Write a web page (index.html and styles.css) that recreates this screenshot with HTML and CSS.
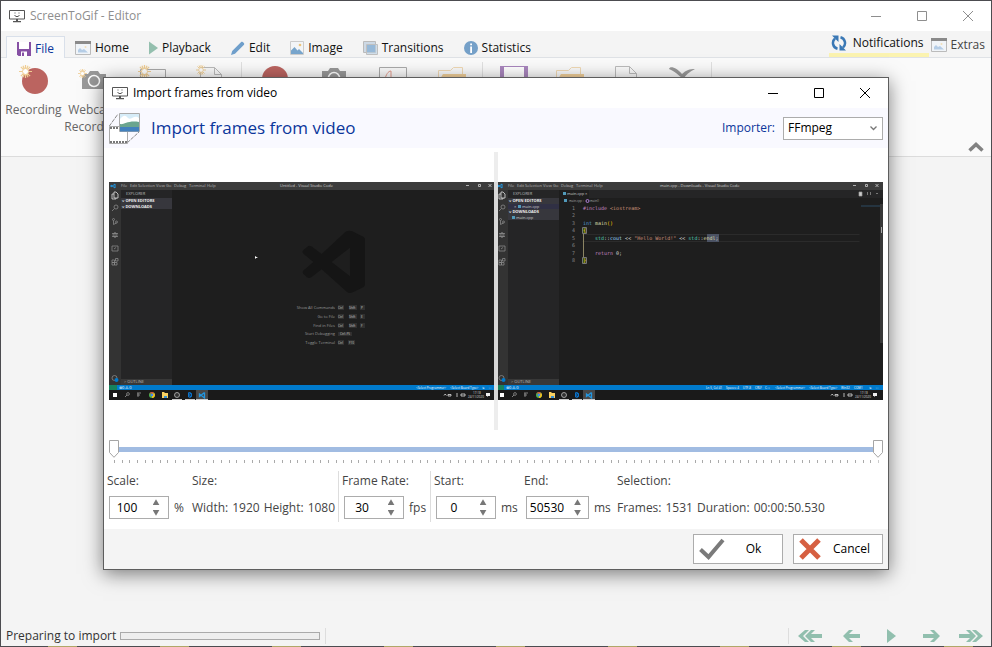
FILE: index.html
```html
<!DOCTYPE html>
<html lang="en">
<head>
<meta charset="utf-8">
<title>ScreenToGif - Editor</title>
<meta name="viewport" content="width=device-width, initial-scale=1">
<link rel="stylesheet" href="styles.css">
</head>
<body>
<svg class="defs" aria-hidden="true">
  <defs>
    <symbol id="monitor" viewBox="0 0 16 14">
      <path d="M.5 1.500h15v8.500H.5z" fill="none" stroke="currentColor"/>
      <path d="M7 10h2v2H7zM4 12h8v1.200H4zM5.500 3.500h1v1h-1zM9.500 3.500h1v1h-1zM5.500 6h1v1h3V6h1v1h-1v1h-3V7h-1z" fill="currentColor"/>
    </symbol>
    <symbol id="min" viewBox="0 0 10 10"><path d="M0 5.500h10" stroke="currentColor"/></symbol>
    <symbol id="max" viewBox="0 0 10 10"><path d="M.5.5h9v9h-9z" fill="none" stroke="currentColor"/></symbol>
    <symbol id="close" viewBox="0 0 10 10"><path d="M0 0l10 10M10 0L0 10" stroke="currentColor"/></symbol>
    <symbol id="window" viewBox="0 0 16 14">
      <path d="M.5.5h15v13H.5z" fill="#f0f4f8" stroke="#bbb"/><path d="M0 0h16v3H0z" fill="#8a8a8a"/>
      <path d="M3 11.500V9l2-2 2 2 2-1 4 3.500z" fill="#b5cde6"/><circle cx="10.500" cy="6" r="1" fill="#f2dfb8"/>
    </symbol>
    <symbol id="star" viewBox="0 0 14 14">
      <path d="M7 0v14M0 7h14M2 2l10 10M12 2L2 12M4.300.7l5.400 12.600M9.700.7L4.300 13.300" stroke="#efcd93" stroke-width="1.300"/>
      <circle cx="7" cy="7" r="3.200" fill="#fff" stroke="#efcd93"/>
    </symbol>
    <symbol id="camera" viewBox="0 0 26 20">
      <path d="M1 4h6l2-3h8l2 3h6v15H1z" fill="#999"/><circle cx="13" cy="11" r="5.500" fill="#999" stroke="#fff" stroke-width="1.500"/>
    </symbol>
    <symbol id="folder" viewBox="0 0 28 28">
      <path d="M.5 28V5.500h12l3-3h9V10" fill="none" stroke="#f0d9b5"/><path d="M5 9h23v5H2z" fill="#f2d09a"/>
    </symbol>
    <symbol id="page" viewBox="0 0 22 28"><path d="M.5 28V.5h14l7 7V28M14.500.5v7h7" fill="none" stroke="#bbb"/></symbol>

    <symbol id="desktop" viewBox="0 0 387 218">
      <path d="M0 0h387v218H0z" fill="#1e1e1e"/>
      <path d="M0 0h387v8H0z" fill="#3c3c3c"/>
      <path d="M0 8h12v195H0z" fill="#333"/>
      <path d="M12 8h51v195H12z" fill="#252526"/>
      <path d="M12 197h51v6H12z" fill="#383838"/>
      <path d="M0 203h387v5H0z" fill="#007acc"/>
      <path d="M0 203h8v5H0z" fill="#16825d"/>
      <path d="M0 208h387v10H0z" fill="#1a1a1a"/>
      <path d="M6 2v4L2 3v2l4-3" fill="none" stroke="#2397e0"/>
      <g class="tiny" fill="#b8b8b8">
        <text x="12" y="5">File</text><text x="21" y="5">Edit</text><text x="29" y="5">Selection</text>
        <text x="47" y="5">View</text><text x="57" y="5">Go</text><text x="65" y="5">Debug</text>
        <text x="80" y="5">Terminal</text><text x="98" y="5">Help</text>
        <text x="17" y="13">EXPLORER</text><text x="15" y="201">&gt; OUTLINE</text>
      </g>
      <path d="M357 3.500h3M369.500 2.500h2v2h-2zM379.500 2l3 3M382.500 2l-3 3" fill="none" stroke="#ccc" stroke-width=".8"/>
      <g fill="none" stroke="#898989" stroke-width=".8">
        <path d="M5 10h2l2 2v4H5zM5 12H3v5h4v-1" stroke="#ddd"/>
        <circle cx="7" cy="25" r="2"/><path d="M5.500 26.500L3 29"/>
        <circle cx="4.500" cy="37.500" r="1"/><circle cx="7.500" cy="40" r="1"/><path d="M4.500 38.500v4M7.500 41l-3 1.500"/>
        <circle cx="6" cy="53" r="2"/><path d="M3 51.500h6M3 54.500h6M6 50v6"/>
        <path d="M3 64h6v5H3zM5 67l2-1.500"/><path d="M3 78h2.500v2.500H3zM3 80.500h2.500V83H3zM5.500 80.500H8V83H5.500zM6.500 76.500H9V79H6.500z"/>
        <circle cx="5.500" cy="196" r="2.500"/>
      </g>
      <circle cx="7.500" cy="198" r="2" fill="#007acc"/>
      <text class="tiny" x="10" y="207" fill="#fff">⊗0 ⚠0</text>
      <path d="M87 208h12v10H87z" fill="#474747"/>
      <path d="M63 217h10v1H63zM76 217h10v1H76zM87 217h12v1H87z" fill="#c8c8c8"/>
      <path d="M4 211h4v4H4z" fill="#fff"/>
      <path d="M16 215l2-2M28 211h4M28 213h3M29 211v4" stroke="#999" stroke-width=".8"/><circle cx="19" cy="212" r="1.400" fill="none" stroke="#999" stroke-width=".7"/>
      <circle cx="43" cy="213" r="3" fill="#4caf50"/><path d="M40.400 211.500a3 3 0 0 1 5.200 0z" fill="#e34133"/><path d="M43 216a3 3 0 0 0 2.600-4.500H43z" fill="#fbc116"/><circle cx="43" cy="213" r="1.300" fill="#4285f4"/>
      <path d="M53 210h2l1 1h3v5h-6z" fill="#fad162"/><path d="M55 214h3v2h-3z" fill="#3b93d8"/>
      <circle cx="68" cy="213" r="2.500" fill="#333" stroke="#bbb" stroke-width=".8"/>
      <path d="M79 210.500l2-.5 2 1.500v3l-2 1.500-2-1z" fill="#0b72c9"/><path d="M80.500 211.500l1 1.500-1 1.500" stroke="#123" fill="none"/>
      <path d="M95.500 210.500v5.500L90.500 212v2.500l5-4" fill="none" stroke="#2397e0" stroke-width="1.300"/>
      <path d="M335 213.500l1.200-1.500 1.200 1.500M339 212.500h3v1.500h-3zM348 211v4M352 212h4v2h-4z" fill="none" stroke="#ddd" stroke-width=".8"/>
      <g class="micro" fill="#ddd"><text x="364" y="212">17:18</text><text x="359" y="216">24/11/2020</text></g>
      <path d="M377 211h4v3h-2l-1 1v-1h-1z" fill="#eee"/>
    </symbol>
  </defs>
</svg>

<div class="app">
  <header class="titlebar titlebar-main">
    <svg class="mark"><use href="#monitor"/></svg>
    <span class="title">ScreenToGif - Editor</span>
    <div class="controls">
      <button aria-label="Minimize"><svg><use href="#min"/></svg></button>
      <button aria-label="Maximize"><svg><use href="#max"/></svg></button>
      <button aria-label="Close"><svg><use href="#close"/></svg></button>
    </div>
  </header>

  <nav class="tabs">
    <button class="tab active">
      <svg class="i14" viewBox="0 0 14 14"><path d="M0 0h14v14H1.500L0 12.500z" fill="#8650a4"/><path d="M2 0h10v7H2z" fill="#fff"/><path d="M4 9.500h6V14H4z" fill="#fff"/><path d="M5 10.500h2V14H5z" fill="#8650a4"/></svg>File</button>
    <button class="tab"><svg class="i16"><use href="#window"/></svg>Home</button>
    <button class="tab"><svg class="i9" viewBox="0 0 9 14"><path d="M0 .5L9 7l-9 6.500z" fill="#94bfae"/></svg>Playback</button>
    <button class="tab"><svg class="i14" viewBox="0 0 14 14"><path d="M0 14l1.200-4 9-9c1-1 3.800 1.500 2.800 2.800l-9 9z" fill="#6f9fcb"/></svg>Edit</button>
    <button class="tab"><svg class="i14" viewBox="0 0 14 14"><path d="M.5.5h13v13H.5z" fill="#f3f5f7" stroke="#ccc"/><path d="M1 13V9.500L4.500 6l3 3.500L9 8l4 4v1z" fill="#78a5cc"/><circle cx="10" cy="4" r="1.300" fill="#ecc37b"/></svg>Image</button>
    <button class="tab"><svg class="i15" viewBox="0 0 15 14"><path d="M.5.500h12v11H.5z" fill="#cdd9e5" stroke="#bbb"/><path d="M3.500 3.500h11v10h-11z" fill="#b8cfe2" fill-opacity=".6" stroke="#c0c0c0"/><path d="M4 4h8v7H4z" fill="#97b9d8"/></svg>Transitions</button>
    <button class="tab"><svg class="i14" viewBox="0 0 14 14"><circle cx="7" cy="7" r="7" fill="#75a0c8"/><path d="M6.200 2.500h1.800v1.800H6.200zM6.200 5.500h1.800V12H6.200z" fill="#fff"/></svg>Statistics</button>
    <button class="notify"><svg viewBox="0 0 16 16"><path d="M6.500 13.800A6 6 0 0 1 4 3.500M9.500 2.200A6 6 0 0 1 12 12.500" fill="none" stroke="#3a78b5" stroke-width="2.500"/><path d="M1 .5h6.500V7zM15 15.500H8.500V9z" fill="#3a78b5"/></svg>Notifications</button>
    <button class="extras"><svg class="i16"><use href="#window"/></svg>Extras</button>
  </nav>

  <section class="ribbon">
    <div class="group">
      <button class="tool"><svg viewBox="0 0 30 30"><circle cx="16" cy="16" r="13" fill="#bb6460"/><use href="#star" x="0" y="0" width="13" height="13"/></svg>Recording</button>
      <button class="tool"><svg viewBox="0 0 30 30"><use href="#camera" x="3" y="5" width="26" height="20"/><use href="#star" x="0" y="4" width="9" height="9"/></svg>Webcam Recording</button>
      <button class="tool" aria-label="Board"><svg viewBox="0 0 30 30"><path d="M3.500 4.500h25v25h-25z" fill="none" stroke="#aaa"/><use href="#star" x="1" y="0" width="13" height="13"/></svg></button>
      <button class="tool" aria-label="Blank"><svg viewBox="0 0 30 30"><use href="#page" x="4" y="2" width="22" height="28"/><use href="#star" x="0" y="0" width="10" height="10"/></svg></button>
    </div>
    <div class="group">
      <button class="tool" aria-label="Insert recording"><svg viewBox="0 0 30 30"><circle cx="15" cy="14" r="13" fill="#bb6460"/></svg></button>
      <button class="tool" aria-label="Insert webcam"><svg viewBox="0 0 30 30"><use href="#camera" x="2" y="2" width="26" height="20"/></svg></button>
      <button class="tool" aria-label="Insert board"><svg viewBox="0 0 30 30"><path d="M1.500 2.500h27v25h-27z" fill="none" stroke="#aaa"/><path d="M7 14c1-4 3-8 6-8v6" fill="none" stroke="#e29a8c"/></svg></button>
      <button class="tool" aria-label="Insert media"><svg viewBox="0 0 30 30"><use href="#folder" x="1" y="0" width="28" height="28"/></svg></button>
    </div>
    <div class="group narrow">
      <button class="tool" aria-label="Save"><svg viewBox="0 0 30 30"><path d="M1 1h28v28H1z" fill="#a986bd"/><path d="M5 2h20v14H5z" fill="#fff"/></svg></button>
      <button class="tool" aria-label="Load"><svg viewBox="0 0 30 30"><use href="#folder" x="1" y="0" width="28" height="28"/></svg></button>
      <button class="tool" aria-label="Project"><svg viewBox="0 0 30 30"><use href="#page" x="4" y="1" width="22" height="28"/></svg></button>
      <button class="tool" aria-label="Discard"><svg viewBox="0 0 30 30"><path d="M2 4c1-4 8-1 13 5 4-4 8-5 13-5-6 3-9 6-11 9-4 0-6-5-15-9z" fill="#999"/></svg></button>
    </div>
    <button class="collapse" aria-label="Collapse ribbon"><svg viewBox="0 0 16 10"><path d="M1.500 8.500L8 2.500l6.500 6" fill="none" stroke="#828282" stroke-width="3.500"/></svg></button>
  </section>

  <main class="stage"></main>

  <footer class="status">
    <label for="import-progress">Preparing to import</label>
    <progress id="import-progress" value="0" max="100"></progress>
    <div class="player">
      <button aria-label="First"><svg viewBox="0 0 24 12"><path d="M7 0h4L5 6l6 6H7L0 6zM13 0h4l-4 4h11v4H13l4 4h-4L7 6z" fill="#91bfae"/></svg></button>
      <button aria-label="Previous"><svg viewBox="0 0 24 12"><path d="M10 0h4l-4 4h11v4H10l4 4h-4L4 6z" fill="#91bfae"/></svg></button>
      <button aria-label="Play"><svg viewBox="0 0 24 12"><path d="M8-1l9 7-9 7z" fill="#91bfae"/></svg></button>
      <button aria-label="Next"><svg viewBox="0 0 24 12"><path d="M15 0h-4l4 4H4v4h11l-4 4h4l6-6z" fill="#91bfae"/></svg></button>
      <button aria-label="Last"><svg viewBox="0 0 24 12"><path d="M17 0h-4l6 6-6 6h4l7-6zM11 0H7l4 4H0v4h11l-4 4h4l6-6z" fill="#91bfae"/></svg></button>
    </div>
  </footer>
  <div class="edge"></div>
</div>

<div class="overlay">
  <form class="dialog" role="dialog" aria-labelledby="dialog-title">
    <div class="titlebar">
      <svg class="mark"><use href="#monitor"/></svg>
      <span class="title">Import frames from video</span>
      <div class="controls">
        <button type="button" aria-label="Minimize"><svg><use href="#min"/></svg></button>
        <button type="button" aria-label="Maximize"><svg><use href="#max"/></svg></button>
        <button type="button" aria-label="Close"><svg><use href="#close"/></svg></button>
      </div>
    </div>

    <div class="heading">
      <svg viewBox="0 0 31 31">
        <path d="M0 13.500L9 1M18 30L30 19M30 18V9" fill="none" stroke="#888" stroke-dasharray="4 1"/>
        <path d="M.5 13.500h18v17H.5z" fill="#fff" stroke="#aaa"/>
        <path d="M1 15h9M1 29h18" stroke="#777" stroke-width="2" stroke-dasharray="2 1"/>
        <path d="M10.500.5h20v18h-20z" fill="#d6ecf8" stroke="#aaa"/>
        <path d="M11 6c4-4 5-4 8-1s6-4 11 0v6H11z" fill="#fff"/>
        <path d="M11 11c4 1 8-4 19-2v6H11z" fill="#6ba58f"/><path d="M11 14h19v4.500H11z" fill="#4381bd"/>
      </svg>
      <h1 id="dialog-title">Import frames from video</h1>
      <label for="importer">Importer:</label>
      <select id="importer"><option>FFmpeg</option></select>
    </div>

    <div class="preview">
      <svg class="frame" viewBox="0 0 387 218" role="img" aria-label="First frame">
        <use href="#desktop"/>
        <path d="M12 16h51v11H12z" fill="#37373d"/>
        <g class="tiny bold" fill="#eee"><text x="13" y="20">˅ OPEN EDITORS</text><text x="13" y="26">˅ DOWNLOADS</text></g>
        <text class="tiny" x="171" y="5" fill="#ccc">Untitled - Visual Studio Code</text>
        <g transform="translate(181 -12) scale(.33333)"><path fill-rule="evenodd" d="M165 187q10-7 22-3l33 16q5 3 5 8v135q0 6-5 9l-30 14q-12 6-20-1l-75-67-31 24q-8 4-13 0l-10-9q-6-6 0-12l29-25-29-24q-7-6 0-13l11-9q6-5 12-1l31 23zM180 233l-55 43 55 43z" fill="#151515"/></g>
        <g fill="#303030"><path d="M229 123h6v5h-6zM240 123h8v5h-8zM251 123h5v5h-5zM229 132h6v5h-6zM240 132h8v5h-8zM251 132h5v5h-5zM229 141h6v5h-6zM240 141h8v5h-8zM251 141h5v5h-5zM229 150h14v4h-14zM229 158h6v5h-6zM239 158h7v5h-7z"/></g>
        <g class="micro" fill="#999">
          <g class="tiny" text-anchor="end"><text x="226" y="127">Show All Commands</text><text x="226" y="136">Go to File</text><text x="226" y="145">Find in Files</text><text x="226" y="153">Start Debugging</text><text x="226" y="162">Toggle Terminal</text></g>
          <g fill="#ccc"><text x="229" y="127">Ctrl</text><text x="240" y="127">Shift</text><text x="252" y="127">P</text><text x="229" y="136">Ctrl</text><text x="240" y="136">Shift</text><text x="252" y="136">E</text><text x="229" y="145">Ctrl</text><text x="240" y="145">Shift</text><text x="252" y="145">F</text><text x="231" y="153">Ctrl+F5</text><text x="229" y="162">Ctrl</text><text x="240" y="162">F10</text></g>
        </g>
        <path d="M146 74v3l1-1h2z" fill="#fff"/>
        <g class="micro" fill="#fff"><text x="307" y="207">&lt;Select Programmer&gt;</text><text x="341" y="207">&lt;Select Board Type&gt;</text><text x="373" y="207">⇅</text><text x="380" y="207">□</text></g>
      </svg>
      <svg class="frame" viewBox="0 0 387 218" role="img" aria-label="Last frame">
        <use href="#desktop"/>
        <path d="M63 8h324v8H63z" fill="#252526"/><path d="M63 8h30v8H63z" fill="#1e1e1e"/>
        <path d="M12 16h51v22H12z" fill="#37373d"/><path d="M12 22h51v5H12z" fill="#303044"/>
        <g class="tiny bold" fill="#eee"><text x="13" y="20">˅ OPEN EDITORS</text><text x="13" y="31">˅ DOWNLOADS</text></g>
        <g class="tiny" fill="#ccc"><text x="18" y="26">×</text><text x="26" y="26">main.cpp</text><text x="20" y="37">main.cpp</text><text x="71" y="13">main.cpp</text><text x="89" y="13">×</text><text x="164" y="5">main.cpp - Downloads - Visual Studio Code</text></g>
        <g class="micro" fill="#aaa"><text x="73" y="20">main.cpp ›</text><text x="94" y="20">main()</text></g>
        <path d="M22 23h3v3h-3zM16 34h3v3h-3zM67 10h3v3h-3zM68 17h3v3h-3z" fill="#519aba"/><circle cx="91.500" cy="19" r="1.500" fill="none" stroke="#b180d7"/>
        <path d="M86.500 52.500h277M86.500 59.500h277" stroke="#2b2b2b"/>
        <path d="M211 52h12v8h-12z" fill="#4b5263"/>
        <path d="M87.500 46v36" stroke="#8b8463"/><path d="M86.500 45.500h4v6h-4zM86.500 75.500h4v6h-4z" fill="#384a24" stroke="#777"/>
        <g class="code" fill="#858585"><text x="76" y="28">1</text><text x="76" y="35">2</text><text x="76" y="43">3</text><text x="76" y="50">4</text><text x="76" y="58">5</text><text x="76" y="65">6</text><text x="76" y="73">7</text><text x="76" y="80">8</text></g>
        <g class="code" fill="#d4d4d4">
          <text x="87" y="28"><tspan fill="#c586c0">#include</tspan><tspan fill="#ce9178"> &lt;iostream&gt;</tspan></text>
          <text x="87" y="43"><tspan fill="#569cd6">int</tspan><tspan fill="#dcdcaa"> main</tspan><tspan fill="#ffd700">()</tspan></text>
          <text x="87" y="50" fill="#ffd700">{</text>
          <text x="99" y="58"><tspan fill="#4ec9b0">std</tspan>::<tspan fill="#9cdcfe">cout</tspan> &lt;&lt; <tspan fill="#ce9178">"Hello World!"</tspan> &lt;&lt; <tspan fill="#4ec9b0">std</tspan>::<tspan fill="#dcdcaa">endl</tspan>;</text>
          <text x="99" y="73"><tspan fill="#c586c0">return</tspan> 0;</text>
          <text x="87" y="80" fill="#ffd700">}</text>
        </g>
        <path d="M365 24h19" stroke="#2d4a63"/><path d="M384 22h3v139h-3z" fill="#383838"/><path d="M385 45h1v6h-1z" fill="#aaa"/>
        <path d="M363 10h3v4h-3zM371.500 10v3M374.500 10v3M380 11.500h2" fill="#ccc" stroke="#999" stroke-width=".7"/>
        <g class="micro" fill="#fff"><text x="210" y="207">Ln 5, Col 41</text><text x="230" y="207">Spaces: 4</text><text x="247" y="207">UTF-8</text><text x="259" y="207">CRLF</text><text x="269" y="207">C++</text><text x="279" y="207">&lt;Select Programmer&gt;</text><text x="313" y="207">&lt;Select Board Type&gt;</text><text x="345" y="207">Win32</text><text x="358" y="207">COM1</text><text x="373" y="207">⇅</text><text x="380" y="207">□</text></g>
      </svg>
      <div class="splitter"></div>
    </div>

    <div class="range">
      <input type="range" min="0" max="50530" value="0" aria-label="Selection start">
      <input type="range" min="0" max="50530" value="50530" aria-label="Selection end">
      <div class="ticks"></div>
    </div>

    <div class="fields">
      <div class="field"><label for="scale">Scale:</label>
        <div class="row"><span class="spin"><input id="scale" value="100"><button type="button" aria-label="Increase scale"></button><button type="button" class="down" aria-label="Decrease scale"></button></span><span>%</span></div></div>
      <div class="field"><span>Size:</span>
        <div class="row pairs"><span>Width:</span><span>1920</span><span>Height:</span><span>1080</span></div></div>
      <div class="field ruled"><label for="rate">Frame Rate:</label>
        <div class="row"><span class="spin"><input id="rate" value="30"><button type="button" aria-label="Increase rate"></button><button type="button" class="down" aria-label="Decrease rate"></button></span><span>fps</span></div></div>
      <div class="field ruled"><label for="start">Start:</label>
        <div class="row"><span class="spin"><input id="start" value="0"><button type="button" aria-label="Increase start"></button><button type="button" class="down" aria-label="Decrease start"></button></span><span>ms</span></div></div>
      <div class="field"><label for="end">End:</label>
        <div class="row"><span class="spin wide"><input id="end" value="50530"><button type="button" aria-label="Increase end"></button><button type="button" class="down" aria-label="Decrease end"></button></span><span>ms</span></div></div>
      <div class="field"><span>Selection:</span>
        <div class="row pairs"><span>Frames:</span><span>1531</span><span>Duration:</span><span>00:00:50.530</span></div></div>
    </div>

    <div class="actions">
      <button type="submit"><svg viewBox="0 0 26 22"><path d="M1.500 11.500l8 7.500L24 2" fill="none" stroke="#7a7a7a" stroke-width="4"/></svg><span>Ok</span></button>
      <button type="button"><svg class="cross" viewBox="0 0 22 22"><path d="M2 2l18 18M20 2L2 20" stroke="#d65f41" stroke-width="5"/></svg><span>Cancel</span></button>
    </div>
  </form>
</div>
</body>
</html>
```
FILE: styles.css
```css
* { box-sizing: border-box; }

body {
  margin: 0;
  font: 12px/16px "Open Sans", "Noto Sans", sans-serif;
  color: #222;
}

button, input, select {
  margin: 0;
  padding: 0;
  border: 0;
  background: none;
  font: inherit;
  color: inherit;
}

svg { display: block; flex: none; }
.defs { position: absolute; width: 0; height: 0; }

/* Editor window */
.app {
  display: flex;
  flex-direction: column;
  min-height: 100vh;
  border: 1px solid #4c4c50;
  border-bottom: 0;
  background: #f4f4f4;
}

.titlebar {
  display: flex;
  align-items: center;
  height: 30px;
  padding-left: 8px;
  background: #fff;
  color: #000;
}
.titlebar-main { color: #8e8e8e; }
.mark { width: 16px; height: 14px; margin-right: 5px; color: #555; }
.controls { display: flex; align-self: stretch; margin-left: auto; }
.controls button { display: grid; place-items: center; width: 46px; }
.controls svg { width: 10px; height: 10px; }

.tabs {
  display: flex;
  align-items: flex-end;
  height: 27px;
  padding-left: 5px;
  border-bottom: 1px solid #dfe2e6;
  color: #111;
}
.tab {
  display: flex;
  align-items: center;
  gap: 4px;
  height: 21px;
  padding: 2px 10px 0;
}
.tab.active {
  height: 22px;
  margin-bottom: -1px;
  border: 1px solid #d9e0ea;
  border-bottom: 0;
  background: #fafafa;
  color: #0b369b;
}
.i9 { width: 9px; height: 14px; }
.i14 { width: 14px; height: 14px; }
.i15 { width: 15px; height: 14px; }
.i16 { width: 16px; height: 14px; }
.notify {
  display: flex;
  align-items: center;
  gap: 6px;
  height: 24px;
  margin-left: auto;
  padding: 0 6px 1px 2px;
  border-bottom: 4px solid #fbf3b0;
}
.notify svg { width: 16px; height: 16px; }
.extras {
  display: flex;
  align-items: center;
  gap: 3px;
  height: 24px;
  padding: 0 6px 0 2px;
  color: #444;
}

.ribbon {
  display: flex;
  height: 99px;
  padding: 4px 0;
  border-bottom: 1px solid #dcdcdc;
  background: #fafafa;
}
.group {
  display: flex;
  padding: 3px 1px 0 3px;
  border-right: 1px solid #e0e0e0;
}
.tool {
  display: flex;
  flex-direction: column;
  align-items: center;
  gap: 6px;
  width: 59px;
  line-height: 17px;
  color: #666;
}
.tool svg { width: 30px; height: 30px; }
.narrow .tool { width: 56px; }
.collapse { align-self: flex-end; margin: 0 7px 0 auto; }
.collapse svg { width: 16px; height: 10px; }

.stage { flex: 1; }

.status {
  display: flex;
  align-items: center;
  height: 20px;
  padding-left: 5px;
  color: #333;
}
progress {
  appearance: none;
  width: 200px;
  height: 8px;
  margin: 0 5px 0 4px;
  border: 1px solid #aaa;
}
progress::-webkit-progress-bar { background: #eee; }
.player {
  display: flex;
  flex: 1;
  justify-content: flex-end;
  border-left: 1px solid #ddd;
}
.player button { display: grid; place-items: center; width: 40px; height: 16px; }
.player button:first-child { width: 43px; border-left: 1px solid #ddd; }
.player svg { width: 24px; height: 12px; overflow: visible; }
.edge {
  height: 1px;
  margin: 0 -1px;
  background: repeating-linear-gradient(to right, #4c4c50 0 48px, #b0a768 48px 77px, #4c4c50 77px 112px);
}

/* Import dialog */
.overlay {
  position: absolute;
  inset: 0;
  display: grid;
  place-items: center;
  padding: 24px;
}
.dialog {
  width: 100%;
  max-width: 786px;
  border: 1px solid #5d5d5d;
  background: #fff;
  box-shadow: 0 4px 18px rgba(0, 0, 0, .5);
  color: #444;
}
.heading {
  display: flex;
  align-items: center;
  height: 40px;
  padding: 0 5px;
  background: #f9f9ff;
  color: #0b369b;
}
.heading svg { width: 31px; height: 31px; }
h1 { margin: 0 auto 0 11px; font-size: 17px; line-height: 24px; font-weight: 400; }
select {
  appearance: none;
  width: 100px;
  height: 23px;
  margin-left: 8px;
  padding: 0 4px;
  border: 1px solid #acacac;
  background: #fff url("data:image/svg+xml,%3Csvg xmlns='http://www.w3.org/2000/svg' width='7' height='5'%3E%3Cpath d='M.5.5l3 3 3-3' fill='none' stroke='%23777' stroke-width='1.300'/%3E%3C/svg%3E") no-repeat right 5px center;
  color: #000;
}

.preview {
  position: relative;
  display: grid;
  grid-template-columns: 1fr 1fr;
  align-items: center;
  padding: 34px 5px;
}
.frame { width: 100%; height: auto; }
.splitter {
  position: absolute;
  inset: 4px 0;
  width: 4px;
  margin: 0 auto;
  background: rgba(235, 235, 235, .9);
}
.tiny { font: 4px "Open Sans", sans-serif; }
.micro { font: 3px "Open Sans", sans-serif; }
.bold { font-weight: 700; }
.code { font: 5px "DejaVu Sans Mono", monospace; white-space: pre; }

.range {
  display: grid;
  grid-template-rows: 18px 4px;
  row-gap: 2px;
  padding: 6px 5px 7px;
}
input[type="range"] {
  grid-area: 1 / 1;
  appearance: none;
  width: 100%;
  height: 18px;
  pointer-events: none;
}
input[type="range"]:first-child {
  background: linear-gradient(#a1bce2, #a1bce2) no-repeat center 7px / 100% 5px;
}
input[type="range"]::-webkit-slider-thumb {
  appearance: none;
  width: 10px;
  height: 18px;
  background: url("data:image/svg+xml,%3Csvg xmlns='http://www.w3.org/2000/svg' width='10' height='18'%3E%3Cpath d='M.5.5h9v12L5 17.300.5 12.500z' fill='%23fff' stroke='%23a5a5a5'/%3E%3C/svg%3E");
  pointer-events: auto;
}
.ticks {
  height: 3px;
  margin: 0 4px 0 5px;
  background: repeating-linear-gradient(to right, #aaa 0 1px, transparent 1px 1%);
  border-right: 1px solid #ccc;
}

.fields {
  display: grid;
  grid-template-columns: 84px 150px 92px 90px 93px 1fr;
  padding-bottom: 7px;
}
.field {
  display: grid;
  grid-template-rows: 20px 23px;
  row-gap: 5px;
  align-items: center;
  padding: 0 0 3px 4px;
  white-space: nowrap;
}
.field:first-child { padding-left: 3px; }
.ruled { padding-left: 3px; border-left: 1px solid #ddd; }
.row { display: flex; align-items: center; gap: 5px; }
.pairs { gap: 4px; }
.spin {
  display: grid;
  grid-template-columns: 1fr 24px;
  grid-template-rows: 1fr 1fr;
  width: 60px;
  height: 23px;
  margin-left: 2px;
  border: 1px solid #acacac;
  color: #000;
}
.spin.wide { width: 63px; grid-template-columns: 1fr 21px; }
.spin input { grid-row: 1 / 3; min-width: 0; width: 100%; text-align: center; }
.spin button {
  align-self: center;
  justify-self: center;
  width: 7px;
  height: 6px;
  background: #777;
  clip-path: polygon(50% 0, 100% 100%, 0 100%);
}
.spin .down { grid-column: 2; clip-path: polygon(0 0, 100% 0, 50% 100%); }

.actions {
  display: flex;
  justify-content: flex-end;
  gap: 10px;
  padding: 5px;
  background: #f4f4f4;
}
.actions button {
  display: flex;
  align-items: center;
  width: 90px;
  height: 30px;
  padding-left: 5px;
  border: 1px solid #acacac;
  background: #fff;
  color: #000;
}
.actions svg { width: 26px; height: 22px; }
.actions .cross { width: 22px; }
.actions span { flex: 1; text-align: center; }
```
